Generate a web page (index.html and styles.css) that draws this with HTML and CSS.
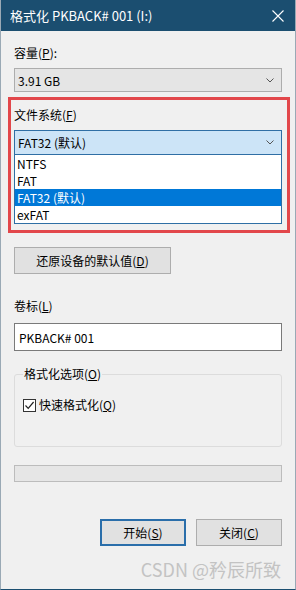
FILE: index.html
```html
<!DOCTYPE html>
<html lang="zh-CN">
<head>
    <meta charset="UTF-8">
    <meta name="viewport" content="width=device-width, initial-scale=1.0">
    <title>格式化 PKBACK# 001 (I:)</title>
    <link rel="stylesheet" href="styles.css">
</head>
<body>

    <div class="window">
        <!-- Judul jendela -->
        <div class="titlebar">
            <span class="title">格式化 PKBACK# 001 (I:)</span>
            <svg class="close" width="12" height="12" viewBox="0 0 12 12">
                <path d="M0.5 0.5 L11.5 11.5 M11.5 0.5 L0.5 11.5" stroke="#fff" stroke-width="1.1" fill="none"/>
            </svg>
        </div>

        <div class="content">
            <div class="label">容量(<u>P</u>):</div>
            <div class="combo">
                <span>3.91 GB</span>
                <svg class="chevron" width="8" height="5" viewBox="0 0 8 5"><path d="M0.5 0.5 L4 4 L7.5 0.5" stroke="#555" fill="none"/></svg>
            </div>

            <!-- Kotak merah -->
            <div class="highlight">
                <div class="label">文件系统(<u>F</u>)</div>
                <div class="combo combo-open">
                    <span>FAT32 (默认)</span>
                    <svg class="chevron" width="8" height="5" viewBox="0 0 8 5"><path d="M0.5 0.5 L4 4 L7.5 0.5" stroke="#555" fill="none"/></svg>
                </div>
                <ul class="list">
                    <li>NTFS</li>
                    <li>FAT</li>
                    <li class="selected">FAT32 (默认)</li>
                    <li>exFAT</li>
                </ul>
            </div>

            <button class="btn btn-restore">还原设备的默认值(<u>D</u>)</button>

            <div class="label label-volume">卷标(<u>L</u>)</div>
            <div class="input">PKBACK# 001</div>

            <fieldset class="group">
                <legend>格式化选项(<u>O</u>)</legend>
                <div class="check-row">
                    <span class="checkbox">
                        <svg width="11" height="11" viewBox="0 0 11 11"><path d="M1.5 5.5 L4.2 8.3 L9.6 2" stroke="#222" stroke-width="1.2" fill="none"/></svg>
                    </span>
                    <span>快速格式化(<u>Q</u>)</span>
                </div>
            </fieldset>

            <div class="progress"></div>

            <div class="actions">
                <button class="btn btn-primary">开始(<u>S</u>)</button>
                <button class="btn">关闭(<u>C</u>)</button>
            </div>

            <div class="watermark">CSDN @矜辰所致</div>
        </div>
    </div>

</body>
</html>
```

FILE: styles.css
```css
html, body {
    margin: 0;
    padding: 0;
}
body {
    width: 296px;
    height: 590px;
    background-color: #f0f0f0;
    font-family: "Noto Sans CJK SC", "Noto Sans", sans-serif;
    font-size: 12px;
    color: #000;
    overflow: hidden;
}
.window {
    height: 590px;
    box-sizing: border-box;
    display: flex;
    flex-direction: column;
    border-left: 1px solid #9aa9b5;
    border-right: 1px solid #9aa9b5;
    border-bottom: 1px solid #1b4e70;
}
.titlebar {
    height: 31px;
    flex-shrink: 0;
    background-color: #1b4e70;
    color: #fff;
    display: flex;
    align-items: center;
    justify-content: space-between;
    padding: 0 11px 0 9px;
    font-size: 13px;
}
.content {
    padding: 14px 13px 0 13px;
    display: flex;
    flex-direction: column;
}
.label {
    line-height: 16px;
    height: 16px;
}
.combo {
    margin-top: 7px;
    height: 24px;
    box-sizing: border-box;
    border: 1px solid #adadad;
    background-color: #e5e5e5;
    display: flex;
    align-items: center;
    justify-content: space-between;
    padding: 0 7px 0 3px;
}
.highlight {
    margin: 5px -8px 0 -6px;
    border: 3px solid #e2474b;
    padding: 7px 5px 6px 3px;
}
.combo-open {
    height: 25px;
    background-color: #cce4f7;
    border-color: #2f6fa5;
}
.list {
    list-style: none;
    margin: 0;
    padding: 0;
    border: 1px solid #2f6fa5;
    border-top: none;
    background-color: #fff;
}
.list li {
    height: 17px;
    line-height: 17px;
    padding-left: 2px;
}
.list .selected {
    background-color: #0078d7;
    color: #fff;
}
.btn {
    font-family: inherit;
    font-size: 12px;
    color: #000;
    background-color: #e1e1e1;
    border: 1px solid #adadad;
    height: 27px;
    padding: 0;
    cursor: pointer;
}
.btn-restore {
    margin-top: 14px;
    width: 157px;
}
.label-volume {
    margin-top: 24px;
}
.input {
    margin-top: 9px;
    height: 28px;
    box-sizing: border-box;
    border: 1px solid #7a7a7a;
    background-color: #fff;
    display: flex;
    align-items: center;
    padding-left: 4px;
}
.group {
    margin: 15px 0 0 0;
    padding: 0 8px 33px 8px;
    border: 1px solid #dcdcdc;
    border-radius: 3px;
}
.group legend {
    padding: 0 1px;
    line-height: 16px;
}
.check-row {
    margin-top: 15px;
    display: flex;
    align-items: center;
    gap: 3px;
    line-height: 16px;
}
.checkbox {
    width: 13px;
    height: 13px;
    box-sizing: border-box;
    border: 1px solid #333;
    background-color: #fff;
    display: flex;
    align-items: center;
    justify-content: center;
}
.progress {
    margin-top: 18px;
    height: 17px;
    box-sizing: border-box;
    border: 1px solid #bcbcbc;
    background-color: #e6e6e6;
}
.actions {
    margin-top: 37px;
    display: flex;
    justify-content: flex-end;
    gap: 10px;
}
.actions .btn {
    width: 86px;
}
.btn-primary {
    border: 2px solid #2a6eaa;
}
.watermark {
    margin-top: 12px;
    text-align: right;
    font-family: "Noto Sans CJK SC", sans-serif;
    font-size: 18px;
    line-height: 22px;
    color: #c3c3c3;
    padding-right: 1px;
}
```
